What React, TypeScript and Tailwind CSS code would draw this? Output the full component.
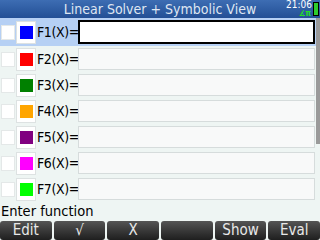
import React from 'react';

const rows = [
  { n: 1, color: 'bg-[#0000ff]' },
  { n: 2, color: 'bg-[#ff0000]' },
  { n: 3, color: 'bg-[#008000]' },
  { n: 4, color: 'bg-[#ffa500]' },
  { n: 5, color: 'bg-[#800080]' },
  { n: 6, color: 'bg-[#ff00ff]' },
  { n: 7, color: 'bg-[#00ff00]' },
];

const menu = ['Edit', '√', 'X', '', 'Show', 'Eval'];

export default function App() {
  return (
    <div className="w-[320px] h-[240px] overflow-hidden bg-[#eef5f3] flex flex-col" style={{ fontFamily: '"DejaVu Sans Condensed", "DejaVu Sans", sans-serif' }}>
      {/* Title bar */}
      <div className="relative h-[18px] shrink-0 bg-gradient-to-b from-[#3d6db3] to-[#234f95] flex items-center justify-center">
        <span className="text-[14px] leading-none text-[#dfe6f2]">Linear Solver + Symbolic View</span>
        <div className="absolute right-[8px] top-0 text-[10px] leading-[10px] text-white">21:06</div>
        <div className="absolute right-[9px] top-[10px] text-[8px] leading-[7px] text-[#22e022] font-bold">∡π</div>
        <div className="absolute right-[1px] top-[2px] w-[6px] h-[14px] bg-black p-[1px]">
          <div className="w-full h-full bg-[#2ecc2e]" />
        </div>
      </div>

      {/* Function rows */}
      <div className="relative flex flex-col">
        {rows.map((r, i) => (
          <div
            key={r.n}
            className={`flex items-center ${i === 0 ? 'h-[28px] bg-[#b6d0f4]' : 'h-[26px]'}`}
          >
            <div className="ml-[1px] w-[14px] h-[15px] bg-white border border-[#e4e8e8]" />
            <div className="ml-[1px] w-[20px] h-[23px] bg-white border border-[#dde2e2] flex items-center justify-center">
              <div className={`w-[13px] h-[13px] ${r.color}`} />
            </div>
            <div className="w-[42px] pl-[1px] text-[14px] leading-none text-black whitespace-nowrap tracking-[-0.4px]">F{r.n}(X)=</div>
            <div
              className={`w-[237px] ${i === 0 ? 'h-[24px] bg-white border-2 border-black' : 'h-[22px] bg-[#f8f9f9] border border-[#d6dcdc]'}`}
            />
          </div>
        ))}
        <div className="absolute right-0 top-0 w-[4px] h-[126px] bg-[#9a9a9a]" />
      </div>

      {/* Prompt */}
      <div className="h-[20px] flex items-center pl-[1px] text-[14.5px] leading-none text-black">Enter function</div>

      {/* Menu */}
      <div className="h-[20px] flex gap-[2px] bg-[#eef5f3]">
        {menu.map((m, i) => (
          <div
            key={i}
            className="flex-1 rounded-[3px] bg-gradient-to-b from-[#555555] to-[#1f1f1f] flex items-center justify-center text-[15px] leading-none text-[#e8e8e8]"
          >
            {m}
          </div>
        ))}
      </div>
    </div>
  );
}
